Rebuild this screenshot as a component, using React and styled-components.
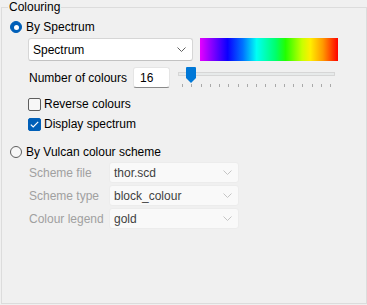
import styled, { createGlobalStyle } from "styled-components";

const Global = createGlobalStyle`
  html, body {
    margin: 0;
    padding: 0;
    background: #f0f0f0;
  }
  body {
    font-family: "Liberation Sans", Arial, sans-serif;
    font-size: 12px;
    color: #000;
  }
`;

const Group = styled.fieldset`
  box-sizing: border-box;
  margin: 0 0 0 1px;
  width: 366px;
  height: 304px;
  padding: 0 8px 0 8px;
  border: 1px solid #dcdcdc;
  min-width: 0;

  legend {
    padding: 0 1px;
    margin-left: -2px;
    line-height: 14px;
  }
`;

const RadioRow = styled.label`
  display: flex;
  align-items: center;
  gap: 4px;
  height: 16px;
  margin-top: ${(p) => p.$top}px;
`;

const Radio = styled.span`
  box-sizing: border-box;
  width: 12px;
  height: 12px;
  border-radius: 50%;
  display: flex;
  align-items: center;
  justify-content: center;
  background: ${(p) => (p.$checked ? "#005fb8" : "#f7f7f7")};
  border: 1px solid ${(p) => (p.$checked ? "#005fb8" : "#5e5e5e")};

  &::after {
    content: "";
    display: ${(p) => (p.$checked ? "block" : "none")};
    width: 5px;
    height: 5px;
    border-radius: 50%;
    background: #fff;
  }
`;

const Indent = styled.div`
  padding-left: 18px;
  display: flex;
  flex-direction: column;
`;

const Row = styled.div`
  display: flex;
  align-items: center;
  margin-top: ${(p) => p.$top || 0}px;
`;

const Select = styled.div`
  box-sizing: border-box;
  width: ${(p) => p.$w}px;
  height: ${(p) => p.$h || 22}px;
  display: flex;
  align-items: center;
  justify-content: space-between;
  padding: 0 6px 0 4px;
  border-radius: 3px;
  background: ${(p) => (p.$disabled ? "#f9f9f9" : "#fff")};
  border: 1px solid ${(p) => (p.$disabled ? "#ececec" : "#d6d6d6")};
  border-bottom-color: ${(p) => (p.$disabled ? "#ececec" : "#c2c2c2")};
  color: ${(p) => (p.$disabled ? "#3f3f3f" : "#000")};
`;

const Spectrum = styled.div`
  width: 138px;
  height: 23px;
  margin-left: 7px;
  background: linear-gradient(
    to right,
    #e600ff 0%,
    #0a00ff 20%,
    #0072ff 31%,
    #00fff4 41%,
    #00ff6a 55%,
    #22ff00 62%,
    #c8ff00 74%,
    #ffee00 80%,
    #ff9a00 89%,
    #ff0000 100%
  );
`;

const Label = styled.span`
  width: ${(p) => (p.$w ? `${p.$w}px` : "auto")};
  padding-left: 1px;
  color: ${(p) => (p.$muted ? "#a0a0a0" : "#000")};
`;

const NumberBox = styled.div`
  box-sizing: border-box;
  width: 37px;
  height: 21px;
  margin-left: 6px;
  padding: 0 0 0 6px;
  display: flex;
  align-items: center;
  background: #fff;
  border: 1px solid #e5e5e5;
  border-bottom: 1px solid #8a8a8a;
  border-radius: 3px;
`;

const Slider = styled.div`
  position: relative;
  width: 157px;
  height: 23px;
  margin-left: 8px;
  align-self: flex-start;
  margin-top: 2px;
`;

const Track = styled.div`
  position: absolute;
  left: 0;
  right: 0;
  top: 5px;
  height: 4px;
  box-sizing: border-box;
  background: #e7eaea;
  border: 1px solid #d6d6d6;
`;

const Ticks = styled.div`
  position: absolute;
  left: 4px;
  right: 4px;
  top: 17px;
  height: 3px;
  display: flex;
  justify-content: space-between;

  span {
    width: 1px;
    height: 3px;
    background: #a9a9a9;
  }
`;

const Thumb = styled.svg`
  position: absolute;
  left: 8px;
  top: 0;
`;

const CheckRow = styled.label`
  display: flex;
  align-items: center;
  gap: 3px;
  height: 16px;
  margin-top: ${(p) => p.$top}px;
`;

const Box = styled.span`
  box-sizing: border-box;
  width: 13px;
  height: 13px;
  border-radius: 2px;
  display: flex;
  align-items: center;
  justify-content: center;
  background: ${(p) => (p.$checked ? "#005fb8" : "#f7f7f7")};
  border: 1px solid ${(p) => (p.$checked ? "#005fb8" : "#5e5e5e")};
`;

const Chevron = ({ color }) => (
  <svg width="9" height="5" viewBox="0 0 9 5">
    <path d="M0.5 0.5 L4.5 4.5 L8.5 0.5" fill="none" stroke={color} strokeWidth="1" />
  </svg>
);

const schemes = [
  { label: "Scheme file", value: "thor.scd", top: 2 },
  { label: "Scheme type", value: "block_colour", top: 2 },
  { label: "Colour legend", value: "gold", top: 2 },
];

export default function App() {
  return (
    <>
      <Global />
      <Group>
        <legend>Colouring</legend>

        <RadioRow $top={5}>
          <Radio $checked />
          By Spectrum
        </RadioRow>

        <Indent>
          <Row $top={3}>
            <Select $w={165} $h={23}>
              Spectrum
              <Chevron color="#606060" />
            </Select>
            <Spectrum />
          </Row>

          <Row $top={4}>
            <Label>Number of colours</Label>
            <NumberBox>16</NumberBox>
            <Slider>
              <Track />
              <Thumb width="10" height="16" viewBox="0 0 10 16">
                <path d="M1 0 H9 A1 1 0 0 1 10 1 V11 L5 16 L0 11 V1 A1 1 0 0 1 1 0 Z" fill="#0078d7" />
              </Thumb>
              <Ticks>
                {Array.from({ length: 17 }).map((_, i) => (
                  <span key={i} />
                ))}
              </Ticks>
            </Slider>
          </Row>

          <CheckRow $top={6}>
            <Box />
            Reverse colours
          </CheckRow>
          <CheckRow $top={4}>
            <Box $checked>
              <svg width="9" height="7" viewBox="0 0 9 7">
                <path d="M0.8 3.6 L3.2 5.9 L8.2 0.8" fill="none" stroke="#fff" strokeWidth="1.2" />
              </svg>
            </Box>
            Display spectrum
          </CheckRow>
        </Indent>

        <RadioRow $top={12}>
          <Radio />
          By Vulcan colour scheme
        </RadioRow>

        <Indent>
          {schemes.map((s) => (
            <Row key={s.label} $top={s.top}>
              <Label $w={80} $muted>
                {s.label}
              </Label>
              <Select $w={130} $h={21} $disabled>
                {s.value}
                <Chevron color="#c4c4c4" />
              </Select>
            </Row>
          ))}
        </Indent>
      </Group>
    </>
  );
}
